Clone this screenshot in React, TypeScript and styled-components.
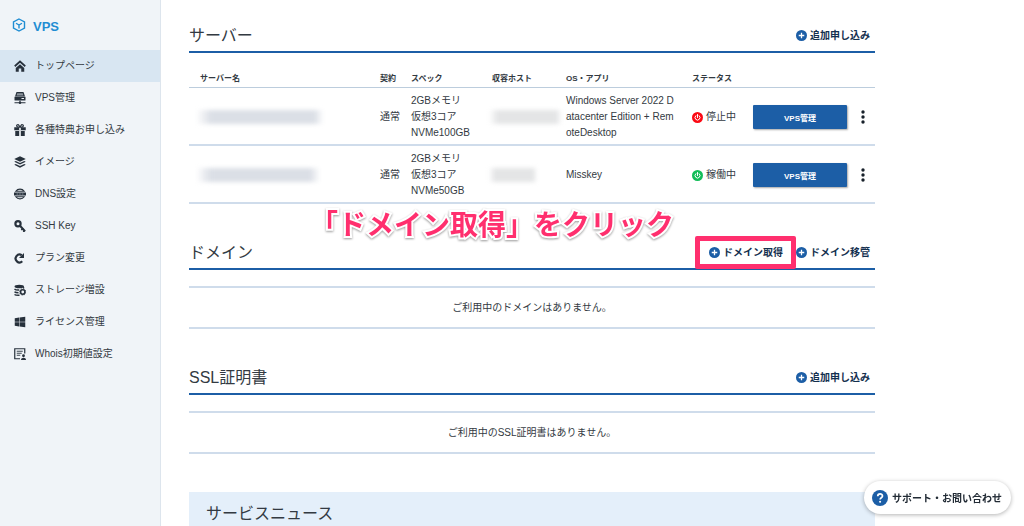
import React from 'react';
import styled, { createGlobalStyle } from 'styled-components';
import { FaWindows } from 'react-icons/fa';

const color = {
  blue: '#1c5ea6',
  navy: '#14304f',
  ink: '#333a42',
  icon: '#27313c',
  line: '#cfdceb',
  pink: '#ff2f6e',
};

const GlobalStyle = createGlobalStyle`
  *, *::before, *::after { box-sizing: border-box; }
  body {
    margin: 0;
    background: #fff;
    color: ${color.ink};
    font: 10px/16px "Liberation Sans", "Noto Sans CJK JP", sans-serif;
  }
  h1, h2, ul, p { margin: 0; padding: 0; }
  a { color: inherit; text-decoration: none; }
  button { font-family: inherit; cursor: pointer; }
`;

const Page = styled.div`
  display: flex;
  min-height: 100vh;
`;

const Sidebar = styled.aside`
  flex: none;
  width: 161px;
  background: #f0f4f8;
  border-right: 1px solid #dde5ed;
`;

const Brand = styled.a`
  display: flex;
  align-items: center;
  gap: 7px;
  height: 50px;
  padding: 3px 12px 0;
  color: #1f8dd3;
  font-size: 13px;
  font-weight: bold;
`;

const BrandIcon = styled.svg`
  width: 14px;
  height: 14px;
  margin-bottom: 4px;
`;

const Menu = styled.ul`
  list-style: none;
`;

const MenuLink = styled.a<{ $active?: boolean }>`
  display: flex;
  align-items: center;
  gap: 9px;
  height: 32px;
  padding: 0 14px;
  background: ${(p) => (p.$active ? '#d8e6f2' : 'transparent')};
  svg {
    width: 12px;
    height: 12px;
    color: ${color.icon};
  }
`;

const Main = styled.main`
  flex: 1;
  min-width: 0;
  display: flex;
  flex-direction: column;
  gap: 32px;
  padding: 19px 149px 0 28px;
`;

const Section = styled.section`
  position: relative;
`;

const SectionHead = styled.header`
  display: flex;
  align-items: center;
  justify-content: space-between;
  height: 34px;
  padding: 1px 5px 0 0;
  border-bottom: 2px solid ${color.blue};
`;

const Title = styled.h2`
  font-size: 16px;
  font-weight: normal;
  line-height: 24px;
`;

const Actions = styled.div`
  display: flex;
  gap: 13px;
`;

const ActionLink = styled.a<{ $marked?: boolean }>`
  position: relative;
  display: flex;
  align-items: center;
  gap: 3px;
  color: ${color.navy};
  font-weight: bold;
  svg {
    width: 11px;
    height: 11px;
  }
  &::after {
    content: '';
    display: ${(p) => (p.$marked ? 'block' : 'none')};
    position: absolute;
    inset: -9px -13px -8px -14px;
    border: 5px solid ${color.pink};
    border-radius: 2px;
  }
`;

const ServerTable = styled.table`
  width: 100%;
  margin-top: 16px;
  table-layout: fixed;
  border-collapse: separate;
  border-spacing: 0;
`;

const Col = styled.col<{ $w?: number }>`
  width: ${(p) => (p.$w ? `${p.$w}px` : 'auto')};
`;

const Th = styled.th<{ $indent?: number }>`
  height: 19px;
  padding: 2px 0 0 ${(p) => p.$indent ?? 0}px;
  border-bottom: 1px solid #bccddd;
  font-size: 8px;
  line-height: 16px;
  text-align: left;
  white-space: nowrap;
`;

const Td = styled.td<{ $center?: boolean }>`
  height: 58px;
  padding: 5px 0 3px;
  border-bottom: 2px solid ${color.line};
  text-align: ${(p) => (p.$center ? 'center' : 'left')};
  vertical-align: middle;
`;

const OsName = styled.p`
  width: 112px;
  word-break: break-all;
`;

const Redacted = styled.div<{ $w: number; $tone: string }>`
  width: ${(p) => p.$w}px;
  height: 14px;
  margin-left: ${(p) => (p.$w > 100 ? 7 : 1)}px;
  background: linear-gradient(90deg, transparent, ${(p) => p.$tone} 12%, ${(p) => p.$tone} 92%, transparent);
  filter: blur(2px);
`;

const Status = styled.span`
  display: flex;
  align-items: center;
  gap: 3px;
  white-space: nowrap;
  svg {
    width: 11px;
    height: 11px;
  }
`;

const ManageButton = styled.button`
  display: block;
  width: 94px;
  height: 24px;
  padding: 0;
  border: 0;
  border-radius: 1px;
  background: ${color.blue};
  box-shadow: 1px 1px 2px rgba(0, 0, 0, 0.35);
  color: #fff;
  font-size: 8px;
  font-weight: bold;
`;

const MoreButton = styled.button`
  display: block;
  margin: 0 auto;
  padding: 0;
  border: 0;
  background: none;
  color: #17202a;
  svg {
    display: block;
    width: 4px;
    height: 14px;
  }
`;

const EmptyNote = styled.p`
  margin-top: 16px;
  padding: 12px 0 11px;
  border: solid ${color.line};
  border-width: 2px 0;
  text-align: center;
`;

const Callout = styled.p`
  position: absolute;
  top: -31px;
  left: 121px;
  color: ${color.pink};
  font-family: "Noto Sans CJK JP", sans-serif;
  font-size: 28px;
  font-weight: bold;
  line-height: 36px;
  white-space: nowrap;
  -webkit-text-stroke: 4px #fff;
  paint-order: stroke fill;
  filter: drop-shadow(0 1px 1px rgba(0, 0, 0, 0.4));
`;

const News = styled.section`
  flex: 1;
  margin-top: 6px;
  padding: 10px 17px 0;
  background: #e4effa;
`;

const Support = styled.button`
  position: fixed;
  right: 13px;
  bottom: 12px;
  display: flex;
  align-items: center;
  gap: 4px;
  height: 33px;
  padding: 0 9px 0 8px;
  border: 0;
  border-radius: 17px;
  background: #fff;
  box-shadow: 0 1px 4px rgba(0, 0, 0, 0.3);
  color: #222b35;
  font-size: 10px;
  font-weight: bold;
  svg {
    width: 16px;
    height: 16px;
  }
`;

const Plus = () => (
  <svg viewBox="0 0 22 22" aria-hidden="true">
    <circle cx="11" cy="11" r="11" fill={color.blue} />
    <path d="M11 5.5v11M5.5 11h11" stroke="#fff" strokeWidth="2.6" />
  </svg>
);

const Power = ({ fill }: { fill: string }) => (
  <svg viewBox="0 0 22 22" aria-hidden="true">
    <circle cx="11" cy="11" r="11" fill={fill} />
    <path d="M7.6 7.4a5 5 0 1 0 6.8 0M11 5v6" fill="none" stroke="#fff" strokeWidth="2" strokeLinecap="round" />
  </svg>
);

const HomeIcon = () => (
  <svg viewBox="0 0 24 24" aria-hidden="true">
    <path d="M1.5 12.5 12 3l10.500 9.500" fill="none" stroke="currentColor" strokeWidth="3.400" />
    <path d="M12 8.500 3.500 16v7.500H9.500V17h5v6.500h6V16Z" fill="currentColor" />
  </svg>
);

const ServerIcon = () => (
  <svg viewBox="0 0 24 24" fill="currentColor" aria-hidden="true">
    <path d="M5 0h14l3 9H2Z" />
    <path d="M6.500 2.500h11l1.300 4.500H5.200Z" fill="#8b949d" />
    <path d="M1 9.500h22V16a1 1 0 0 1-1 1H2a1 1 0 0 1-1-1Z" />
    <path d="M15 13h5" stroke="#f0f4f8" strokeWidth="2" />
    <path d="M11 17h2v3h-2ZM1 20.500h22v1.800H1Z" />
    <circle cx="12" cy="21.500" r="2.500" />
  </svg>
);

const GiftIcon = () => (
  <svg viewBox="0 0 24 24" aria-hidden="true">
    <path d="M11 6.500C5 7 4 2 7 1.500s4 3 4 5ZM13 6.500c6 .5 7-4.500 4-5s-4 3-4 5Z" fill="none" stroke="currentColor" strokeWidth="2.400" />
    <path d="M.5 6.500H10v6H.5ZM14 6.500h9.500v6H14ZM2.500 14H10v10H2.500ZM14 14h7.500v10H14Z" fill="currentColor" />
    <path d="M11 6.500h2V24h-2Z" fill="currentColor" opacity=".35" />
  </svg>
);

const LayersIcon = () => (
  <svg viewBox="0 0 24 24" fill="currentColor" aria-hidden="true">
    <path d="M12 .5 23.500 6 12 11.500.5 6Z" />
    <path d="M.5 11.500 3.500 10 12 14l8.500-4 3 1.500L12 17Z" />
    <path d="M.5 17.500 3.500 16l8.500 4 8.500-4 3 1.500L12 23.500Z" />
  </svg>
);

const GlobeIcon = () => (
  <svg viewBox="0 0 24 24" aria-hidden="true">
    <path d="M3.500 6.500a10.500 10.500 0 0 1 17 0ZM3.500 17.500a10.500 10.500 0 0 0 17 0Z" fill="none" stroke="currentColor" strokeWidth="2.200" />
    <path d="M0 9h24v6H0Z" fill="currentColor" />
    <path d="M5 12h14" stroke="#8b949d" strokeWidth="1.800" strokeDasharray="3.500 1.700" />
  </svg>
);

const KeyIcon = () => (
  <svg viewBox="0 0 24 24" fill="none" stroke="currentColor" aria-hidden="true">
    <circle cx="8" cy="7.500" r="5.200" strokeWidth="4.400" />
    <path d="m11.500 11 10 11" strokeWidth="4" />
    <path d="m14.500 20 4-3.500M18.500 24l4-3.500" strokeWidth="3" />
  </svg>
);

const ReloadIcon = () => (
  <svg viewBox="0 0 24 24" aria-hidden="true">
    <path d="M16.500 18.600A7.800 7.800 0 1 1 15.500 6.500" fill="none" stroke="currentColor" strokeWidth="4.400" />
    <path d="M20 2v10H10Z" fill="currentColor" />
  </svg>
);

const StorageIcon = () => (
  <svg viewBox="0 0 24 24" aria-hidden="true">
    <ellipse cx="10.500" cy="5" rx="9.500" ry="3.500" fill="currentColor" />
    <path d="M1 10c2 2 6 2.300 9.500 2M1 15.500c1.500 1.500 4 2 8 2M1 21c2 1.500 6 1.700 10 1.500M19 6v3" fill="none" stroke="currentColor" strokeWidth="2.800" />
    <circle cx="17.500" cy="16" r="4.400" fill="none" stroke="currentColor" strokeWidth="3.200" />
    <circle cx="17.500" cy="16" r="6.300" fill="none" stroke="currentColor" strokeWidth="1.500" strokeDasharray="2.500 2.450" />
  </svg>
);

const WhoisIcon = () => (
  <svg viewBox="0 0 24 24" aria-hidden="true">
    <path d="M12 21.500H1.500v-20h20V11" fill="none" stroke="currentColor" strokeWidth="2.400" />
    <path d="M5.500 6.500h12M5.500 10.500h10M5.500 14.500h7" stroke="currentColor" strokeWidth="1.800" />
    <circle cx="19" cy="15.500" r="2.800" fill="currentColor" />
    <path d="M14 24c0-6 10-6 10 0Z" fill="currentColor" />
  </svg>
);

const menu = [
  { label: 'トップページ', Icon: HomeIcon, active: true },
  { label: 'VPS管理', Icon: ServerIcon },
  { label: '各種特典お申し込み', Icon: GiftIcon },
  { label: 'イメージ', Icon: LayersIcon },
  { label: 'DNS設定', Icon: GlobeIcon },
  { label: 'SSH Key', Icon: KeyIcon },
  { label: 'プラン変更', Icon: ReloadIcon },
  { label: 'ストレージ増設', Icon: StorageIcon },
  { label: 'ライセンス管理', Icon: FaWindows },
  { label: 'Whois初期値設定', Icon: WhoisIcon },
];

const servers = [
  { disk: 'NVMe100GB', os: 'Windows Server 2022 Datacenter Edition + RemoteDesktop', status: '停止中', fill: '#fb0a14', nameWidth: 128, hostWidth: 73 },
  { disk: 'NVMe50GB', os: 'Misskey', status: '稼働中', fill: '#12bd58', nameWidth: 124, hostWidth: 48 },
];

export default function App() {
  return (
    <>
      <GlobalStyle />
      <Page>
        <Sidebar>
          <Brand href="#">
            <BrandIcon viewBox="0 0 28 28" fill="none" stroke="currentColor" strokeWidth="2.800" aria-hidden="true">
              <path d="M14 2 25 8v12l-11 6L3 20V8Z" />
              <path d="m8 10.500 6 3.500 6-3.500M14 14v7" />
            </BrandIcon>
            VPS
          </Brand>
          <nav>
            <Menu>
              {menu.map(({ label, Icon, active }) => (
                <li key={label}>
                  <MenuLink href="#" $active={active}>
                    <Icon />
                    {label}
                  </MenuLink>
                </li>
              ))}
            </Menu>
          </nav>
        </Sidebar>

        <Main>
          <Section>
            <SectionHead>
              <Title>サーバー</Title>
              <Actions>
                <ActionLink href="#"><Plus />追加申し込み</ActionLink>
              </Actions>
            </SectionHead>
            <ServerTable>
              <colgroup>
                <Col />
                <Col $w={31} />
                <Col $w={77} />
                <Col $w={78} />
                <Col $w={126} />
                <Col $w={61} />
                <Col $w={98} />
                <Col $w={24} />
              </colgroup>
              <thead>
                <tr>
                  <Th $indent={11}>サーバー名</Th>
                  <Th>契約</Th>
                  <Th>スペック</Th>
                  <Th $indent={4}>収容ホスト</Th>
                  <Th>OS・アプリ</Th>
                  <Th>ステータス</Th>
                  <Th />
                  <Th />
                </tr>
              </thead>
              <tbody>
                {servers.map((s) => (
                  <tr key={s.disk}>
                    <Td><Redacted $w={s.nameWidth} $tone="#dbdfe6" /></Td>
                    <Td>通常</Td>
                    <Td>2GBメモリ<br />仮想3コア<br />{s.disk}</Td>
                    <Td><Redacted $w={s.hostWidth} $tone="#e4e5e6" /></Td>
                    <Td><OsName>{s.os}</OsName></Td>
                    <Td><Status><Power fill={s.fill} />{s.status}</Status></Td>
                    <Td><ManageButton type="button">VPS管理</ManageButton></Td>
                    <Td $center>
                      <MoreButton type="button" aria-label="メニュー">
                        <svg viewBox="0 0 4 14" fill="currentColor" aria-hidden="true">
                          <circle cx="2" cy="2" r="1.700" />
                          <circle cx="2" cy="7" r="1.700" />
                          <circle cx="2" cy="12" r="1.700" />
                        </svg>
                      </MoreButton>
                    </Td>
                  </tr>
                ))}
              </tbody>
            </ServerTable>
          </Section>

          <Section>
            <SectionHead>
              <Title>ドメイン</Title>
              <Actions>
                <ActionLink href="#" $marked><Plus />ドメイン取得</ActionLink>
                <ActionLink href="#"><Plus />ドメイン移管</ActionLink>
              </Actions>
            </SectionHead>
            <EmptyNote>ご利用中のドメインはありません。</EmptyNote>
            <Callout>「ドメイン取得」をクリック</Callout>
          </Section>

          <Section>
            <SectionHead>
              <Title>SSL証明書</Title>
              <Actions>
                <ActionLink href="#"><Plus />追加申し込み</ActionLink>
              </Actions>
            </SectionHead>
            <EmptyNote>ご利用中のSSL証明書はありません。</EmptyNote>
          </Section>

          <News>
            <Title>サービスニュース</Title>
          </News>
        </Main>
      </Page>

      <Support type="button">
        <svg viewBox="0 0 32 32" aria-hidden="true">
          <circle cx="16" cy="16" r="16" fill={color.blue} />
          <path d="M11.500 12.500c0-6 9.500-6 9.500-.5 0 3.500-4.800 3.500-4.800 7" fill="none" stroke="#fff" strokeWidth="3.400" />
          <circle cx="16.200" cy="23.500" r="2.100" fill="#fff" />
        </svg>
        サポート・お問い合わせ
      </Support>
    </>
  );
}
